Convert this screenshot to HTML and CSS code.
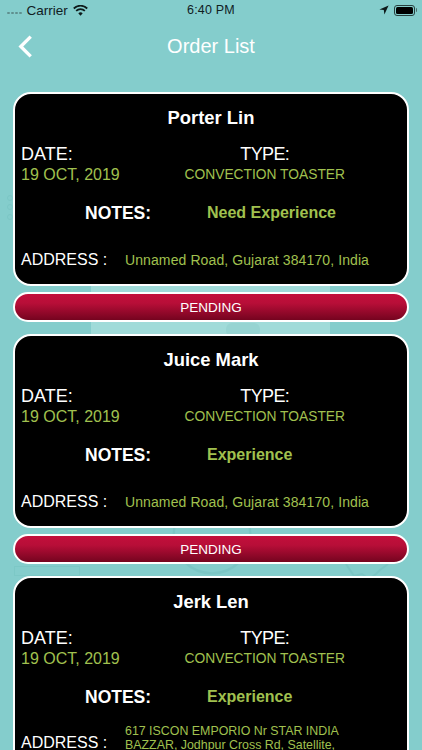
FILE: index.html
```html
<!DOCTYPE html>
<html lang="en">
<head>
<meta charset="utf-8">
<title>Order List</title>
<link rel="stylesheet" href="styles.css">
</head>
<body>
<div class="screen">
  <div class="watermark" aria-hidden="true">
    <div class="wm-rect"></div>
    <div class="wm-blot"></div>
    <div class="wm-bar"></div>
    <svg class="wm-gear" viewBox="0 0 100 100"><circle cx="50" cy="50" r="48"/></svg>
    <svg class="wm-cog" viewBox="0 0 50 30"><path d="M4 8 12 20 20 18 27 23 34 18 38 14 46 8"/></svg>
    <svg class="wm-dots" viewBox="0 0 6 28"><circle cx="3" cy="4" r="2.5"/><circle cx="3" cy="13" r="2.5"/><circle cx="3" cy="23" r="2.5"/></svg>
  </div>
  <div class="statusbar">
    <div class="sb-left">
      <span class="dots"><i></i><i></i><i></i><i></i></span>
      <span class="carrier">Carrier</span>
      <svg class="wifi" viewBox="0 0 16 12"><path d="M8 11.6 5.6 9a3.4 3.4 0 0 1 4.8 0z"/><path d="M3.9 7.2 2.6 5.8a7.7 7.7 0 0 1 10.8 0l-1.3 1.4a5.8 5.8 0 0 0-8.2 0z"/><path d="M1.3 4.5 0 3.1a11.4 11.4 0 0 1 16 0l-1.3 1.4a9.5 9.5 0 0 0-13.4 0z"/></svg>
    </div>
    <div class="sb-time">6:40 PM</div>
    <div class="sb-right">
      <svg class="loc" viewBox="0 0 10 10"><path d="M9.6.4.4 4.6l4.4.5.6 4.5z" /></svg>
      <span class="battery"><span class="level"></span></span>
      <span class="nub"></span>
    </div>
  </div>
  <header class="navbar">
    <svg class="back" viewBox="0 0 16 24"><path d="M13 2.5 3.5 12l9.5 9.5"/></svg>
    <h1>Order List</h1>
  </header>
  <main class="list">
    <section class="order">
      <div class="card">
        <h2>Porter Lin</h2>
        <div class="meta">
          <div class="col-date"><div class="label">DATE:</div><div class="val">19 OCT, 2019</div></div>
          <div class="col-type"><div class="label type">TYPE:</div><div class="val small">CONVECTION TOASTER</div></div>
        </div>
        <div class="notes"><span class="n-label">NOTES:</span><span class="n-val">Need Experience</span></div>
        <div class="address"><span class="a-label">ADDRESS :</span><span class="a-val">Unnamed Road, Gujarat 384170, India</span></div>
      </div>
      <button class="status">PENDING</button>
    </section>
    <section class="order">
      <div class="card">
        <h2>Juice Mark</h2>
        <div class="meta">
          <div class="col-date"><div class="label">DATE:</div><div class="val">19 OCT, 2019</div></div>
          <div class="col-type"><div class="label type">TYPE:</div><div class="val small">CONVECTION TOASTER</div></div>
        </div>
        <div class="notes"><span class="n-label">NOTES:</span><span class="n-val">Experience</span></div>
        <div class="address"><span class="a-label">ADDRESS :</span><span class="a-val">Unnamed Road, Gujarat 384170, India</span></div>
      </div>
      <button class="status">PENDING</button>
    </section>
    <section class="order">
      <div class="card">
        <h2>Jerk Len</h2>
        <div class="meta">
          <div class="col-date"><div class="label">DATE:</div><div class="val">19 OCT, 2019</div></div>
          <div class="col-type"><div class="label type">TYPE:</div><div class="val small">CONVECTION TOASTER</div></div>
        </div>
        <div class="notes"><span class="n-label">NOTES:</span><span class="n-val">Experience</span></div>
        <div class="address multi"><span class="a-label">ADDRESS :</span><span class="a-val">617 ISCON EMPORIO Nr STAR INDIA BAZZAR, Jodhpur Cross Rd, Satellite,</span></div>
      </div>
    </section>
  </main>
</div>
</body>
</html>
```
FILE: styles.css
```css
* { box-sizing: border-box; margin: 0; padding: 0; }
html, body { width: 422px; height: 750px; overflow: hidden; }
body { font-family: "Liberation Sans", Arial, sans-serif; background: #84cdcc; }
.screen { position: relative; width: 422px; height: 750px; overflow: hidden; background: #84cdcc; }
.watermark { position: absolute; inset: 0; pointer-events: none; }
.wm-rect { position: absolute; left: 91px; top: 270px; width: 239px; height: 100px; background: #a0dbd9; }
.wm-blot { position: absolute; left: 226px; top: 323px; width: 34px; height: 14px; border-radius: 6px; background: #96d4d2; }
.wm-bar { position: absolute; left: 14px; top: 566px; width: 66px; height: 10px; border: 1px solid #7cc8c6; }
.wm-gear { position: absolute; left: 172px; top: 495px; width: 80px; height: 80px; fill: none; stroke: #7bc6c5; stroke-width: 3; }
.wm-cog { position: absolute; left: 342px; top: 556px; width: 50px; height: 30px; fill: none; stroke: #7bc6c5; stroke-width: 2; }
.wm-dots { position: absolute; left: 7px; top: 194px; width: 6px; height: 28px; fill: none; stroke: #7bc6c5; stroke-width: 1; }

.statusbar { position: relative; height: 20px; display: flex; align-items: center; justify-content: space-between; color: #10201f; font-size: 12.5px; }
.sb-left { display: flex; align-items: center; gap: 5px; padding-left: 7px; }
.carrier { font-size: 13.5px; }
.dots { display: flex; gap: 1.5px; padding-top: 6px; }
.dots i { width: 2.5px; height: 2.5px; border-radius: 50%; background: #5f8f8f; }
.wifi { width: 15px; height: 11px; fill: #0d1a1a; }
.sb-time { position: absolute; left: 0; right: 0; text-align: center; letter-spacing: .2px; }
.sb-right { display: flex; align-items: center; padding-right: 5px; }
.loc { width: 10px; height: 10px; fill: #0d1a1a; margin-right: 5px; }
.battery { width: 21px; height: 11px; border: 1px solid #27403f; border-radius: 3px; padding: 1px; display: block; }
.level { display: block; width: 100%; height: 100%; background: #000; border-radius: 1.5px; }
.nub { width: 1.5px; height: 4px; background: #4a6a6a; margin-left: 1px; border-radius: 0 1px 1px 0; }

.navbar { position: relative; height: 52px; display: flex; align-items: center; justify-content: center; }
.navbar h1 { font-size: 20px; font-weight: 400; color: #fff; }
.back { position: absolute; left: 17px; top: 14px; width: 17px; height: 25px; fill: none; stroke: #fff; stroke-width: 3.2; }

.list { position: relative; padding: 20px 13px 0; display: flex; flex-direction: column; gap: 12.2px; }
.order { display: flex; flex-direction: column; gap: 6px; }
.card { height: 194px; background: #000; border: 2px solid #fff; border-radius: 18px; padding: 0 6px; color: #fff; }
.card h2 { font-size: 18.4px; font-weight: 700; text-align: center; height: 21px; line-height: 21px; margin-top: 13px; }
.meta { display: flex; margin-top: 16px; }
.col-date { width: 163px; }
.col-type { width: 220px; text-align: center; padding-right: 54px; }
.label { font-size: 18px; line-height: 21px; }
.label.type { letter-spacing: -.6px; }
.val { font-size: 16px; line-height: 19px; color: #a0c14f; }
.val.small { font-size: 13.8px; }
.notes { display: flex; margin-top: 19px; line-height: 20px; }
.n-label { font-size: 17.5px; font-weight: 700; margin-left: 64px; width: 122px; color: #fff; }
.n-val { font-size: 16px; font-weight: 700; color: #a0c14f; }
.address { display: flex; align-items: center; margin-top: 27px; height: 20px; }
.a-label { font-size: 16px; width: 104px; flex: none; }
.a-val { font-size: 14px; color: #a0c14f; line-height: 14px; letter-spacing: .1px; }
.address.multi { height: auto; margin-top: 16.5px; align-items: flex-end; }
.address.multi .a-val { width: 225px; font-size: 12.4px; line-height: 14.3px; letter-spacing: 0; }
.status { display: block; width: 100%; height: 30px; border: 2px solid #fff; border-radius: 15px; background: linear-gradient(#c20f3b 0%, #b80e38 35%, #75041f 100%); color: #fff; font: 400 13.5px "Liberation Sans", Arial, sans-serif; }
```
